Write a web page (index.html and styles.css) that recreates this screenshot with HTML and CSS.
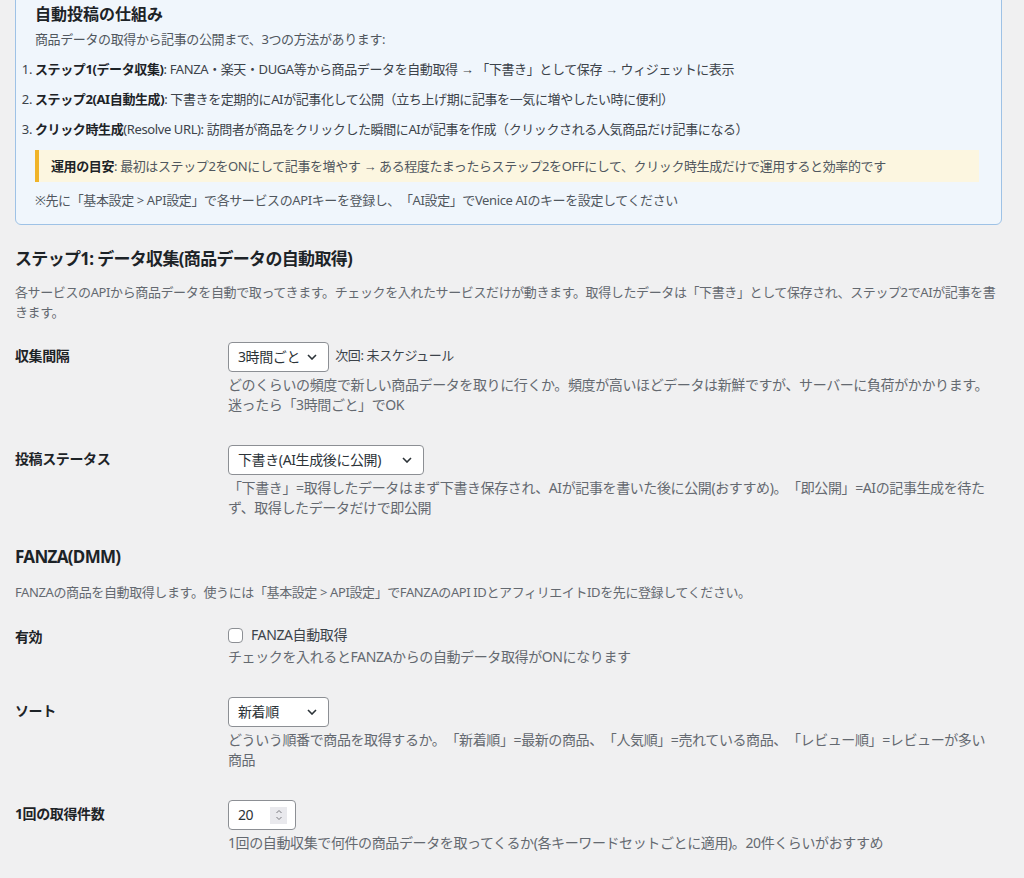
FILE: index.html
```html
<!DOCTYPE html>
<html lang="ja">
<head>
    <meta charset="UTF-8">
    <meta name="viewport" content="width=device-width, initial-scale=1.0">
    <title>自動投稿設定</title>
    <link rel="stylesheet" href="styles.css">
</head>
<body>
    <div class="wrap">
        <div class="info-box">
            <h3>自動投稿の仕組み</h3>
            <p class="intro">商品データの取得から記事の公開まで、3つの方法があります:</p>
            <ol>
                <li><strong>ステップ1(データ収集)</strong>: FANZA・楽天・DUGA等から商品データを自動取得 → 「下書き」として保存 → ウィジェットに表示</li>
                <li><strong>ステップ2(AI自動生成)</strong>: 下書きを定期的にAIが記事化して公開（立ち上げ期に記事を一気に増やしたい時に便利）</li>
                <li><strong>クリック時生成</strong>(Resolve URL): 訪問者が商品をクリックした瞬間にAIが記事を作成（クリックされる人気商品だけ記事になる）</li>
            </ol>
            <div class="notice"><strong>運用の目安</strong>: 最初はステップ2をONにして記事を増やす → ある程度たまったらステップ2をOFFにして、クリック時生成だけで運用すると効率的です</div>
            <p class="note">※先に「基本設定 &gt; API設定」で各サービスのAPIキーを登録し、「AI設定」でVenice AIのキーを設定してください</p>
        </div>

        <h2 class="first">ステップ1: データ収集(商品データの自動取得)</h2>
        <p class="section-desc">各サービスのAPIから商品データを自動で取ってきます。チェックを入れたサービスだけが動きます。取得したデータは「下書き」として保存され、ステップ2でAIが記事を書きます。</p>

        <table class="form-table">
            <tr>
                <th>収集間隔</th>
                <td>
                    <span class="select select-sm">3時間ごと
                        <svg width="10" height="6" viewBox="0 0 10 6"><path d="M1 1l4 4 4-4" fill="none" stroke="#2c3338" stroke-width="1.6"/></svg>
                    </span>
                    <span class="next-run">次回: 未スケジュール</span>
                    <p class="description">どのくらいの頻度で新しい商品データを取りに行くか。頻度が高いほどデータは新鮮ですが、サーバーに負荷がかかります。<br>迷ったら「3時間ごと」でOK</p>
                </td>
            </tr>
            <tr>
                <th>投稿ステータス</th>
                <td>
                    <span class="select select-md">下書き(AI生成後に公開)
                        <svg width="10" height="6" viewBox="0 0 10 6"><path d="M1 1l4 4 4-4" fill="none" stroke="#2c3338" stroke-width="1.6"/></svg>
                    </span>
                    <p class="description">「下書き」=取得したデータはまず下書き保存され、AIが記事を書いた後に公開(おすすめ)。「即公開」=AIの記事生成を待たず、取得したデータだけで即公開</p>
                </td>
            </tr>
        </table>

        <h2>FANZA(DMM)</h2>
        <p class="section-desc">FANZAの商品を自動取得します。使うには「基本設定 &gt; API設定」でFANZAのAPI IDとアフィリエイトIDを先に登録してください。</p>

        <table class="form-table fanza">
            <tr>
                <th>有効</th>
                <td class="check-cell">
                    <label class="check"><span class="checkbox"></span>FANZA自動取得</label>
                    <p class="description">チェックを入れるとFANZAからの自動データ取得がONになります</p>
                </td>
            </tr>
            <tr>
                <th>ソート</th>
                <td>
                    <span class="select select-sm">新着順
                        <svg width="10" height="6" viewBox="0 0 10 6"><path d="M1 1l4 4 4-4" fill="none" stroke="#2c3338" stroke-width="1.6"/></svg>
                    </span>
                    <p class="description">どういう順番で商品を取得するか。「新着順」=最新の商品、「人気順」=売れている商品、「レビュー順」=レビューが多い<br>商品</p>
                </td>
            </tr>
            <tr>
                <th>1回の取得件数</th>
                <td>
                    <span class="number">20
                        <span class="spin">
                            <svg width="8" height="14" viewBox="0 0 8 14"><path d="M1.5 5l2.5-2.5 2.5 2.5M1.5 9l2.5 2.5 2.5-2.5" fill="none" stroke="#7a7a80" stroke-width="1"/></svg>
                        </span>
                    </span>
                    <p class="description">1回の自動収集で何件の商品データを取ってくるか(各キーワードセットごとに適用)。20件くらいがおすすめ</p>
                </td>
            </tr>
        </table>
    </div>
</body>
</html>
```

FILE: styles.css
```css
body {
    margin: 0;
    background-color: #f0f0f1;
    font-family: "Noto Sans", "Liberation Sans", "Noto Sans CJK JP", sans-serif;
    font-size: 13px;
    letter-spacing: -0.03em;
    text-spacing-trim: space-all;
    color: #3c434a;
}

.wrap {
    padding: 0 22px 0 15px;
}

/* info box */
.info-box {
    margin-top: -10px;
    padding: 11px 20px 14px 19px;
    border: 1px solid #9ec2e6;
    border-radius: 6px;
    background-color: #f0f6fc;
}

.info-box h3 {
    margin: 0 0 3px;
    font-size: 16px;
    line-height: 24px;
    font-weight: 700;
    letter-spacing: 0;
    color: #1d2327;
}

.info-box p {
    margin: 0;
    line-height: 20px;
    color: #50575e;
}

.info-box .intro {
    margin-bottom: 10px;
}

.info-box ol {
    margin: 0;
    padding-left: 0;
}

.info-box li {
    line-height: 20px;
    margin-bottom: 10px;
    color: #3c434a;
}

.info-box li:last-child {
    margin-bottom: 0;
}

.info-box strong {
    color: #1d2327;
}

.notice {
    margin: 11px 2px 8px 0;
    padding: 6px 12px;
    border-left: 4px solid #f0b429;
    background-color: #fcf6e0;
    line-height: 20px;
    color: #50575e;
}

/* sections */
h2 {
    margin: 12px 0 0;
    font-size: 17px;
    line-height: 24px;
    font-weight: 700;
    letter-spacing: -0.04em;
    color: #1d2327;
}

h2.first {
    margin-top: 22px;
}

.section-desc {
    margin: 13px 0 0;
    line-height: 20px;
    color: #646970;
}

h2.first + .section-desc {
    margin-top: 11px;
}

.form-table {
    margin-top: 5px;
    border-collapse: collapse;
    width: 100%;
    font-size: 14px;
}

.form-table.fanza {
    margin-top: 6px;
}

.form-table th {
    width: 203px;
    padding: 20px 10px 20px 0;
    text-align: left;
    vertical-align: top;
    line-height: 17px;
    font-weight: 700;
    color: #1d2327;
}

.form-table td {
    padding: 15px 10px 15px 0;
    vertical-align: top;
    line-height: 20px;
}

.form-table td.check-cell {
    padding-top: 17px;
}

.description {
    margin: 3px 0 0;
    line-height: 20px;
    color: #646970;
}

.check-cell .description {
    margin-top: 2px;
}

/* controls */
.select {
    display: inline-flex;
    align-items: center;
    justify-content: space-between;
    box-sizing: border-box;
    height: 30px;
    padding: 0 11px 0 9px;
    border: 1px solid #8c8f94;
    border-radius: 4px;
    background-color: #fff;
    color: #2c3338;
    vertical-align: top;
}

.select-sm {
    width: 101px;
}

.select-md {
    width: 196px;
}

.next-run {
    margin-left: 3px;
    font-size: 13px;
    line-height: 26px;
    color: #3c434a;
}

.number {
    display: inline-flex;
    align-items: center;
    justify-content: space-between;
    box-sizing: border-box;
    width: 68px;
    height: 30px;
    padding: 0 8px 0 9px;
    border: 1px solid #8c8f94;
    border-radius: 4px;
    background-color: #fff;
    color: #2c3338;
}

.spin {
    display: flex;
    align-items: center;
    justify-content: center;
    width: 17px;
    height: 17px;
    background-color: #e9e9ed;
}

.check {
    display: flex;
    align-items: center;
    color: #3c434a;
}

.checkbox {
    width: 15px;
    height: 15px;
    box-sizing: border-box;
    margin-right: 8px;
    border: 1px solid #8c8f94;
    border-radius: 4px;
    background-color: #fff;
}
```
